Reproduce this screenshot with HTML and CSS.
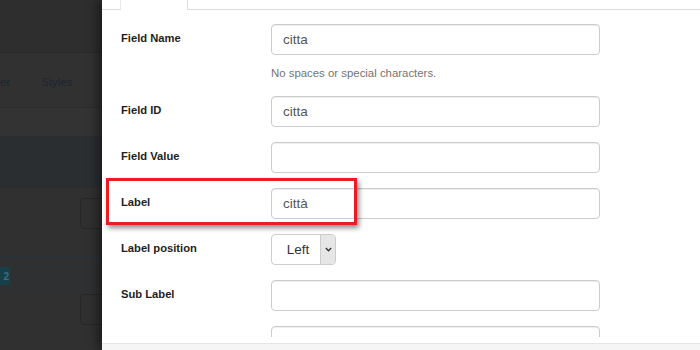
FILE: index.html
```html
<!DOCTYPE html>
<html>
<head>
<meta charset="utf-8">
<link rel="stylesheet" href="styles.css">
</head>
<body>
<div class="page">
  <div class="backdrop">
    <div class="band band-top"></div>
    <div class="band band-nav">
      <span class="nav-item">er</span>
      <span class="nav-item">Styles</span>
    </div>
    <div class="band band-light"></div>
    <div class="band band-blue"></div>
    <div class="band band-field"><span class="ghost-input"></span></div>
    <div class="band band-badge"><span class="badge">2</span></div>
    <div class="band band-field2"><span class="ghost-input"></span></div>
  </div>
  <div class="panel">
    <div class="tabs">
      <div class="tab active"></div>
    </div>
    <div class="body">
      <div class="row">
        <label class="label">Field Name</label>
        <div class="control">
          <div class="input">citta</div>
          <p class="help">No spaces or special characters.</p>
        </div>
      </div>
      <div class="row">
        <label class="label">Field ID</label>
        <div class="control"><div class="input">citta</div></div>
      </div>
      <div class="row">
        <label class="label">Field Value</label>
        <div class="control"><div class="input"></div></div>
      </div>
      <div class="row">
        <label class="label">Label</label>
        <div class="control"><div class="input">città</div></div>
      </div>
      <div class="row">
        <label class="label">Label position</label>
        <div class="control">
          <div class="select">
            <span class="select-text">Left</span>
            <span class="select-arrow">
              <svg width="7" height="5" viewBox="0 0 7 5"><path d="M0.8 0.9 L3.5 3.7 L6.2 0.9" fill="none" stroke="#333" stroke-width="1.4"/></svg>
            </span>
          </div>
        </div>
      </div>
      <div class="row">
        <label class="label">Sub Label</label>
        <div class="control"><div class="input"></div></div>
      </div>
      <div class="row">
        <label class="label"></label>
        <div class="control"><div class="input"></div></div>
      </div>
    </div>
    <div class="spacer"></div>
    <div class="footer"></div>
    <div class="highlight"></div>
  </div>
</div>
</body>
</html>
```
FILE: styles.css
```css
html, body {
  margin: 0;
  padding: 0;
  width: 700px;
  height: 350px;
  overflow: hidden;
  font-family: "Liberation Sans", Arial, sans-serif;
}
.page {
  display: flex;
  width: 700px;
  height: 350px;
}
.backdrop {
  width: 102px;
  flex: none;
  display: flex;
  flex-direction: column;
  background: #303030;
  overflow: hidden;
}
.band { flex: none; }
.band-top { height: 52px; background: #2e2e2e; border-bottom: 1px solid #292929; }
.band-nav {
  height: 55px;
  background: #313131;
  border-bottom: 1px solid #2b2b2b;
  display: flex;
  align-items: center;
  gap: 31px;
  padding-top: 4px;
  box-sizing: border-box;
}
.nav-item { font-size: 11.5px; color: #1d2531; white-space: nowrap; }
.band-light { height: 28px; background: #333333; }
.band-blue { height: 52px; background: #2b2e31; }
.band-field {
  height: 69px;
  background: #303030;
  border-bottom: 1px solid #28343a;
  padding-top: 10px;
  box-sizing: border-box;
}
.ghost-input {
  display: block;
  margin-left: 80px;
  width: 40px;
  height: 31px;
  box-sizing: border-box;
  border: 1px solid #272727;
  border-radius: 4px;
}
.band-badge {
  height: 37px;
  background: #2e3032;
  padding-top: 10px;
  box-sizing: border-box;
}
.badge {
  display: flex;
  width: 10px;
  height: 18px;
  border-radius: 0 3px 3px 0;
  background: #173f4c;
  color: #3f6f7c;
  font-size: 10px;
  font-weight: bold;
  align-items: center;
  justify-content: flex-end;
  padding-right: 1px;
  box-sizing: border-box;
}
.band-field2 { height: 60px; background: #303030; }

.panel {
  flex: 1;
  position: relative;
  z-index: 1;
  background: #fff;
  display: flex;
  flex-direction: column;
  box-shadow: -4px 0 10px rgba(0, 0, 0, 0.45);
}
.tabs {
  height: 9px;
  flex: none;
  border-bottom: 1px solid #dddddd;
  padding-left: 18px;
  display: flex;
}
.tab.active {
  width: 68px;
  height: 10px;
  box-sizing: border-box;
  background: #fff;
  border-left: 1px solid #e9e9e9;
  border-right: 1px solid #dddddd;
}
.body {
  flex: 1;
  overflow: hidden;
  padding: 14px 0 0 19px;
}
.row {
  display: grid;
  grid-template-columns: 150px 329px;
  margin-bottom: 15px;
}
.label {
  font-size: 11.2px;
  font-weight: bold;
  color: #1e1e1e;
  line-height: 15px;
  padding-top: 7px;
}
.input {
  height: 31px;
  box-sizing: border-box;
  border: 1px solid #cccccc;
  border-radius: 4px;
  box-shadow: inset 0 1px 1px rgba(0, 0, 0, 0.075);
  padding: 0 11px;
  font-size: 13.5px;
  color: #555;
  line-height: 29px;
}
.help {
  margin: 11px 0 1px;
  font-size: 11.4px;
  line-height: 14px;
  color: #737373;
}
.select {
  width: 65px;
  height: 31px;
  box-sizing: border-box;
  border: 1px solid #cccccc;
  border-radius: 4px;
  display: flex;
  overflow: hidden;
}
.select-text {
  flex: 1;
  display: flex;
  align-items: center;
  justify-content: center;
  font-size: 13.5px;
  color: #333;
  padding-left: 4px;
}
.select-arrow {
  width: 14px;
  background: #e6e6e6;
  border-left: 1px solid #cccccc;
  display: flex;
  align-items: center;
  justify-content: center;
}
.spacer { height: 6px; flex: none; }
.footer {
  height: 6px;
  flex: none;
  background: #f5f5f5;
  border-top: 1px solid #e5e5e5;
}
.highlight {
  position: absolute;
  left: 4px;
  top: 178px;
  width: 251px;
  height: 47px;
  box-sizing: border-box;
  border: 3px solid #ec1c24;
  box-shadow: 2px 3px 5px rgba(0, 0, 0, 0.45);
  pointer-events: none;
}
```
